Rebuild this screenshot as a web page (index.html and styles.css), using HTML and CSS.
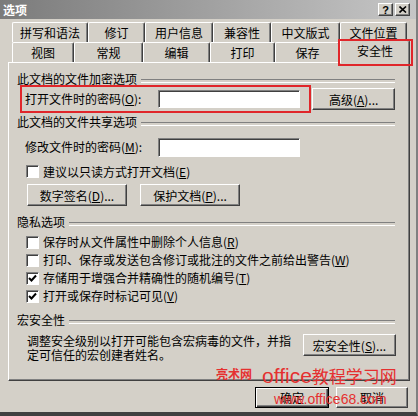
FILE: index.html
```html
<!DOCTYPE html>
<html lang="zh-CN">
<head>
    <meta charset="UTF-8">
    <title>选项</title>
    <link rel="stylesheet" href="styles.css">
</head>
<body>
<div class="window">
    <div class="titlebar">
        <span class="title">选项</span>
        <div class="title-buttons">
            <span class="tbtn">?</span>
            <span class="tbtn">
                <svg width="8" height="7" viewBox="0 0 8 7"><path d="M0.5 0.5 L7 6.5 M7 0.5 L0.5 6.5" stroke="#000" stroke-width="1.6"/></svg>
            </span>
        </div>
    </div>

    <div class="tabs">
        <div class="tab-row">
            <div class="tab w76">拼写和语法</div>
            <div class="tab w57">修订</div>
            <div class="tab w68">用户信息</div>
            <div class="tab w58">兼容性</div>
            <div class="tab w69">中文版式</div>
            <div class="tab w67">文件位置</div>
        </div>
        <div class="tab-row">
            <div class="tab w62">视图</div>
            <div class="tab w69">常规</div>
            <div class="tab w67">编辑</div>
            <div class="tab w65">打印</div>
            <div class="tab w65">保存</div>
            <div class="tab w70 active">安全性</div>
        </div>
    </div>

    <div class="panel">
        <div class="group-title">此文档的文件加密选项</div>
        <div class="enc-row">
            <div class="highlight">
                <span class="field-label">打开文件时的密码(<u>O</u>):</span>
                <div class="textbox"></div>
            </div>
            <button class="btn btn-adv">高级(<u>A</u>)...</button>
        </div>

        <div class="group-title gt-share">此文档的文件共享选项</div>
        <div class="field-row">
            <span class="field-label">修改文件时的密码(<u>M</u>):</span>
            <div class="textbox tall"></div>
        </div>
        <div class="check-row first">
            <span class="checkbox"></span>建议以只读方式打开文档(<u>E</u>)
        </div>
        <div class="btn-row">
            <button class="btn w100">数字签名(<u>D</u>)...</button>
            <button class="btn w100">保护文档(<u>P</u>)...</button>
        </div>

        <div class="group-title gt-privacy">隐私选项</div>
        <div class="check-list">
            <div class="check-row"><span class="checkbox"></span>保存时从文件属性中删除个人信息(<u>R</u>)</div>
            <div class="check-row"><span class="checkbox"></span>打印、保存或发送包含修订或批注的文件之前给出警告(<u>W</u>)</div>
            <div class="check-row"><span class="checkbox checked"><svg width="9" height="9" viewBox="0 0 9 9"><path d="M1 4 L3.5 6.5 L8 1.5" fill="none" stroke="#000" stroke-width="2"/></svg></span>存储用于增强合并精确性的随机编号(<u>T</u>)</div>
            <div class="check-row"><span class="checkbox checked"><svg width="9" height="9" viewBox="0 0 9 9"><path d="M1 4 L3.5 6.5 L8 1.5" fill="none" stroke="#000" stroke-width="2"/></svg></span>打开或保存时标记可见(<u>V</u>)</div>
        </div>

        <div class="group-title gt-macro">宏安全性</div>
        <div class="macro-row">
            <p class="macro-text">调整安全级别以打开可能包含宏病毒的文件，并指<br>定可信任的宏创建者姓名。</p>
            <button class="btn btn-macro">宏安全性(<u>S</u>)...</button>
        </div>
    </div>

    <div class="footer">
        <button class="btn btn-ok default">确定</button>
        <button class="btn btn-cancel">取消</button>
    </div>

    <!-- 水印 -->
    <span class="wm wm-site">亮术网</span>
    <span class="wm wm-name">office<span class="wm-cjk">教程学习网</span></span>
    <span class="wm wm-url">www.office68.com</span>
</div>
</body>
</html>
```

FILE: styles.css
```css
* {
    box-sizing: border-box;
}

body {
    margin: 0;
    font-family: "Noto Sans CJK SC", "Noto Sans", sans-serif;
    font-size: 12px;
    color: #000;
    background-color: #d4d0c8;
}

.window {
    position: relative;
    width: 418px;
    height: 416px;
    background-color: #d4d0c8;
    border-right: 2px solid #808080;
    border-bottom: 4px solid #404040;
    overflow: hidden;
}

/* 标题栏 */
.titlebar {
    height: 19px;
    display: flex;
    align-items: center;
    justify-content: space-between;
    padding: 0 6px 0 3px;
    background: linear-gradient(to right, #7b7b7b, #c6c6c6);
}

.title {
    color: #fff;
    font-weight: bold;
    line-height: 19px;
}

.title-buttons {
    display: flex;
    gap: 2px;
}

.tbtn {
    width: 15px;
    height: 13px;
    display: flex;
    align-items: center;
    justify-content: center;
    background-color: #d4d0c8;
    border: 1px solid;
    border-color: #fff #404040 #404040 #fff;
    box-shadow: inset -1px -1px #808080;
    font: bold 11px "Liberation Sans", sans-serif;
}

/* 选项卡 */
.tabs {
    padding: 3px 0 0 12px;
}

.tab-row {
    display: flex;
    height: 20px;
    align-items: flex-end;
}

.tab {
    height: 20px;
    display: flex;
    align-items: center;
    justify-content: center;
    line-height: 14px;
    background-color: #d4d0c8;
    border-top: 1px solid #fff;
    border-left: 1px solid #fff;
    border-right: 1px solid #404040;
    border-radius: 2px 2px 0 0;
    box-shadow: inset -1px 0 #808080;
}

.tab.active {
    position: relative;
    z-index: 1;
    height: 23px;
    margin-bottom: -1px;
    padding-bottom: 2px;
}

.tab.active::after {
    content: "";
    position: absolute;
    top: -2px;
    left: -3px;
    right: -4px;
    bottom: -3px;
    border: 2px solid #e0262a;
}

.w57 { width: 57px; }
.w58 { width: 58px; }
.w62 { width: 62px; }
.w65 { width: 65px; }
.w67 { width: 67px; }
.w68 { width: 68px; }
.w69 { width: 69px; }
.w70 { width: 70px; }
.w76 { width: 76px; }
.w100 { width: 100px; }

/* 面板 */
.panel {
    margin-left: 8px;
    width: 402px;
    height: 319px;
    padding: 9px 14px 0 8px;
    border: 1px solid;
    border-color: #fff #404040 #404040 #fff;
    box-shadow: inset -1px -1px #808080;
}

.group-title {
    display: flex;
    align-items: center;
    height: 14px;
    line-height: 14px;
}

.group-title::after {
    content: "";
    flex: 1;
    height: 2px;
    margin: 4px 0 0 4px;
    border-top: 1px solid #808080;
    border-bottom: 1px solid #fff;
}

.gt-share { margin-top: 2px; }
.gt-privacy { margin-top: 9px; }
.gt-macro { margin-top: 8px; }

.enc-row {
    display: flex;
    align-items: center;
    margin-top: -1px;
}

.highlight {
    display: flex;
    align-items: center;
    width: 292px;
    height: 28px;
    margin-left: 3px;
    padding-left: 3px;
    border: 2px solid #e0262a;
}

.field-label {
    width: 133px;
    line-height: 14px;
}

.textbox {
    width: 142px;
    height: 18px;
    background-color: #fff;
    border: 1px solid;
    border-color: #808080 #fff #fff #808080;
    box-shadow: inset 1px 1px #404040;
}

.textbox.tall {
    height: 19px;
}

.field-row {
    display: flex;
    align-items: center;
    height: 20px;
    margin-top: 8px;
    padding-left: 8px;
}

.btn {
    display: flex;
    align-items: center;
    justify-content: center;
    height: 22px;
    padding: 0;
    font-family: inherit;
    font-size: 12px;
    color: #000;
    background-color: #d4d0c8;
    border: 1px solid;
    border-color: #fff #404040 #404040 #fff;
    box-shadow: inset -1px -1px #808080;
}

.btn-adv {
    width: 83px;
    margin-left: 1px;
}

.check-row {
    display: flex;
    align-items: center;
    height: 18px;
    padding-left: 9px;
    line-height: 14px;
}

.check-row.first {
    height: 17px;
    margin-top: 6px;
}

.checkbox {
    width: 13px;
    height: 13px;
    margin-right: 4px;
    display: flex;
    align-items: center;
    justify-content: center;
    background-color: #fff;
    border: 1px solid;
    border-color: #808080 #fff #fff #808080;
    box-shadow: inset 1px 1px #404040;
}

.btn-row {
    display: flex;
    gap: 13px;
    margin-top: 4px;
    padding-left: 10px;
}

.check-list {
    margin-top: 4px;
}

.macro-row {
    display: flex;
    align-items: flex-start;
    margin-top: 5px;
    padding-left: 10px;
}

.macro-text {
    width: 276px;
    margin: 0;
    padding-top: 2px;
    line-height: 14px;
}

.btn-macro {
    width: 93px;
    margin: 2px -1px 0 0;
}

/* 底部按钮 */
.footer {
    display: flex;
    justify-content: flex-end;
    gap: 7px;
    padding: 6px 8px 0 0;
}

.btn-ok {
    width: 74px;
    height: 21px;
}

.btn-cancel {
    width: 72px;
    height: 21px;
}

.btn.default {
    border-color: #000;
    box-shadow: inset 1px 1px #fff, inset -1px -1px #404040, inset -2px -2px #808080;
}

/* 水印 */
.wm {
    position: absolute;
    color: #e53030;
    white-space: nowrap;
}

.wm-site {
    left: 216px;
    top: 365px;
    font-size: 12px;
    font-weight: bold;
}

.wm-name {
    left: 262px;
    top: 363px;
    font: 21px "Liberation Sans", sans-serif;
}

.wm-cjk {
    font-family: "Noto Sans CJK SC", sans-serif;
    font-size: 17px;
}

.wm-url {
    left: 274px;
    top: 391px;
    font: 14px "Liberation Sans", sans-serif;
}
```
